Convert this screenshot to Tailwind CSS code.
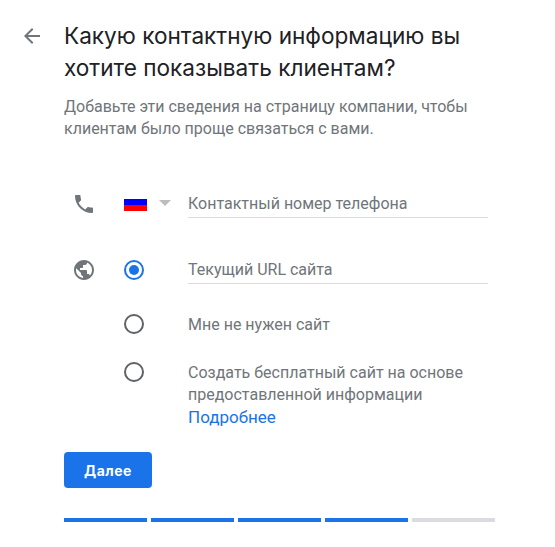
<!DOCTYPE html>
<html lang="en">
<head>
  <meta charset="UTF-8" />
  <title>Контактная информация</title>
  <script src="https://cdn.jsdelivr.net/npm/@tailwindcss/browser@4"></script>
</head>
<body class="bg-white font-['Roboto',sans-serif] overflow-hidden">
  <main class="w-[555px] h-[547px] flex pt-5 pl-5">
    <div class="w-[24px] mr-5 pt-[4px] shrink-0">
      <svg class="w-6 h-6 fill-[#70757a]" viewBox="0 0 24 24"><path d="M20 11H7.83l5.59-5.59L12 4l-8 8 8 8 1.41-1.41L7.83 13H20v-2z"/></svg>
    </div>
    <div class="w-[431px]">
      <h1 class="text-[22.6px] leading-[32px] text-[#202124] font-['Inter',sans-serif]">Какую контактную информацию вы хотите показывать клиентам?</h1>
      <p class="mt-[12px] text-[16px] leading-[22px] text-[#70757a]">Добавьте эти сведения на страницу компании, чтобы клиентам было проще связаться с вами.</p>

      <div class="mt-[50px] flex items-center h-[28px] w-[424px]">
        <svg class="ml-[8px] w-6 h-6 fill-[#70757a] shrink-0" viewBox="0 0 24 24"><path d="M6.62 10.79c1.44 2.83 3.76 5.14 6.59 6.59l2.2-2.2c.27-.27.67-.36 1.02-.24 1.12.37 2.33.57 3.57.57.55 0 1 .45 1 1V20c0 .55-.45 1-1 1-9.39 0-17-7.61-17-17 0-.55.45-1 1-1h3.5c.55 0 1 .45 1 1 0 1.25.2 2.45.57 3.57.11.35.03.74-.25 1.02l-2.2 2.2z"/></svg>
        <div class="ml-[28px] mt-[2px] w-[23px] h-[12px] flex flex-col shrink-0">
          <div class="flex-1 bg-[#0000ff]"></div>
          <div class="flex-1 bg-[#ff0000]"></div>
        </div>
        <div class="ml-[12px] mb-[2px] w-0 h-0 border-x-[6px] border-x-transparent border-t-[6px] border-t-[#bdbdbd] shrink-0"></div>
        <div class="ml-[17px] flex-1 h-[28px] flex items-center border-b border-[#dadce0] text-[16px] text-[#70757a]">Контактный номер телефона</div>
      </div>

      <div class="mt-[38px] flex items-center h-[28px] w-[424px]">
        <svg class="ml-[8px] w-6 h-6 fill-[#70757a] shrink-0" viewBox="0 0 24 24"><path d="M12 2C6.48 2 2 6.48 2 12s4.48 10 10 10 10-4.48 10-10S17.52 2 12 2zm-1 17.93c-3.95-.49-7-3.85-7-7.93 0-.62.08-1.21.21-1.79L9 15v1c0 1.1.9 2 2 2v1.93zm6.9-2.54c-.26-.81-1-1.39-1.9-1.39h-1v-3c0-.55-.45-1-1-1H8v-2h2c.55 0 1-.45 1-1V7h2c1.1 0 2-.9 2-2v-.41c2.93 1.19 5 4.06 5 7.41 0 2.08-.8 3.97-2.1 5.39z"/></svg>
        <div class="ml-[28px] w-5 h-5 rounded-full border-2 border-[#1a73e8] flex items-center justify-center shrink-0">
          <div class="w-[10px] h-[10px] rounded-full bg-[#1a73e8]"></div>
        </div>
        <div class="ml-[44px] flex-1 h-[28px] flex items-center border-b border-[#dadce0] text-[16px] text-[#70757a]">Текущий URL сайта</div>
      </div>

      <div class="mt-[28px] flex items-center h-[24px] pl-[60px]">
        <div class="w-5 h-5 rounded-full border-2 border-[#5f6368] shrink-0"></div>
        <div class="ml-[44px] pt-px text-[16px] text-[#70757a]">Мне не нужен сайт</div>
      </div>

      <div class="mt-[25px] flex items-start pl-[60px]">
        <div class="mt-px w-5 h-5 rounded-full border-2 border-[#5f6368] shrink-0"></div>
        <div class="ml-[44px] pt-px w-[300px] text-[16px] leading-[22px] text-[#70757a]">
          Создать бесплатный сайт на основе предоставленной информации<br />
          <a href="#" class="text-[17px] leading-[22px] text-[#1a73e8]">Подробнее</a>
        </div>
      </div>

      <button class="mt-[23px] block w-[88px] h-[36px] rounded-[4px] bg-[#1a73e8] text-white text-[14px] font-bold tracking-[0.5px] font-['Inter',sans-serif]">Далее</button>

      <div class="mt-[30px] flex gap-1 w-[431px]">
        <div class="flex-1 h-1 bg-[#1a73e8]"></div>
        <div class="flex-1 h-1 bg-[#1a73e8]"></div>
        <div class="flex-1 h-1 bg-[#1a73e8]"></div>
        <div class="flex-1 h-1 bg-[#1a73e8]"></div>
        <div class="flex-1 h-1 bg-[#dadce0]"></div>
      </div>
    </div>
  </main>
</body>
</html>
